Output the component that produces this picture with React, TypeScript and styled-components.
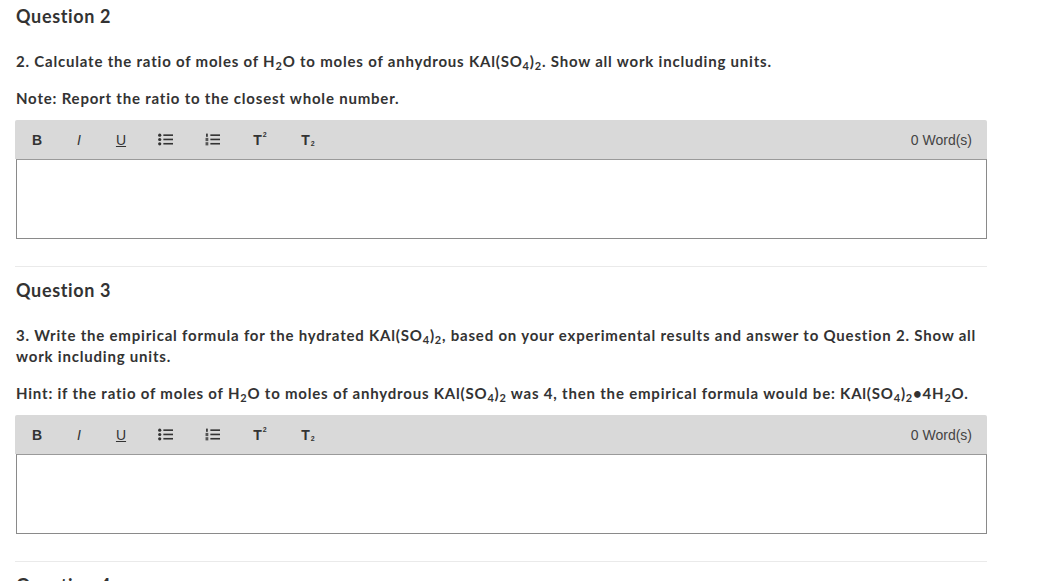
import styled, { createGlobalStyle } from "styled-components";

const GlobalStyle = createGlobalStyle`
  body {
    margin: 0;
    background: #fff;
    font-family: Lato, "Open Sans", "Liberation Sans", sans-serif;
    color: #333;
  }
`;

const Page = styled.div`
  width: 972px;
  padding: 5px 0 0 15px;
`;

const Question = styled.section`
  border-bottom: 1px solid #eaeaea;
  margin-bottom: 12px;
`;

const Title = styled.h2`
  margin: 0 0 24px 1px;
  font-size: 18px;
  line-height: 22px;
  font-weight: 700;
  letter-spacing: 0.65px;
`;

const Para = styled.p`
  margin: 0 0 16px 1px;
  font-size: 15px;
  line-height: 21px;
  font-weight: 700;
  letter-spacing: 0.8px;
  &:last-of-type {
    margin-bottom: 11px;
  }
  sub {
    font-size: 11px;
    line-height: 0;
    vertical-align: -3px;
  }
`;

const Editor = styled.div`
  margin-bottom: 27px;
`;

const Toolbar = styled.div`
  height: 39px;
  background: #d9d9d9;
  border-radius: 2px 2px 0 0;
  display: flex;
  align-items: center;
  padding: 0 15px 0 1px;
  font-family: "Liberation Sans", Arial, sans-serif;
  color: #333;
`;

const Tool = styled.span<{
  $w: number;
  $bold?: boolean;
  $italic?: boolean;
  $under?: boolean;
}>`
  width: ${(p) => p.$w}px;
  display: flex;
  justify-content: center;
  align-items: center;
  font-size: 14px;
  font-weight: ${(p) => (p.$bold ? 700 : 400)};
  font-style: ${(p) => (p.$italic ? "italic" : "normal")};
  text-decoration: ${(p) => (p.$under ? "underline" : "none")};
`;

const Script = styled.span<{ $up?: boolean }>`
  font-size: 7px;
  font-weight: 700;
  margin-left: 1px;
  position: relative;
  top: ${(p) => (p.$up ? "-5px" : "4px")};
`;

const Words = styled.span`
  margin-left: auto;
  font-size: 14px;
  color: #444;
`;

const Area = styled.div`
  height: 78px;
  margin-left: 1px;
  border: 1px solid #8a8a8a;
  border-top-color: #9a9a9a;
  background: #fff;
`;

const BulletIcon = () => (
  <svg width="15" height="13" viewBox="0 0 14 12" fill="#333">
    <circle cx="1.6" cy="2" r="1.5" />
    <circle cx="1.6" cy="6" r="1.5" />
    <circle cx="1.6" cy="10" r="1.5" />
    <rect x="5" y="1.2" width="9" height="1.5" />
    <rect x="5" y="5.2" width="9" height="1.5" />
    <rect x="5" y="9.2" width="9" height="1.5" />
  </svg>
);

const NumberIcon = () => (
  <svg width="15" height="13" viewBox="0 0 14 12" fill="#333">
    <rect x="1" y="0.5" width="1.6" height="3" />
    <rect x="0.5" y="4.5" width="2.6" height="3" opacity="0.8" />
    <rect x="0.5" y="8.5" width="2.6" height="3" opacity="0.8" />
    <rect x="5" y="1.2" width="9" height="1.5" />
    <rect x="5" y="5.2" width="9" height="1.5" />
    <rect x="5" y="9.2" width="9" height="1.5" />
  </svg>
);

const RichEditor = () => (
  <Editor>
    <Toolbar>
      <Tool $w={42} $bold>
        B
      </Tool>
      <Tool $w={42} $italic>
        I
      </Tool>
      <Tool $w={42} $under>
        U
      </Tool>
      <Tool $w={46}>
        <BulletIcon />
      </Tool>
      <Tool $w={48}>
        <NumberIcon />
      </Tool>
      <Tool $w={48} $bold>
        T<Script $up>2</Script>
      </Tool>
      <Tool $w={48} $bold>
        T<Script>2</Script>
      </Tool>
      <Words>0 Word(s)</Words>
    </Toolbar>
    <Area />
  </Editor>
);

export default function App() {
  return (
    <Page>
      <GlobalStyle />
      <Question>
        <Title>Question 2</Title>
        <Para>
          2. Calculate the ratio of moles of H<sub>2</sub>O to moles of anhydrous
          KAl(SO<sub>4</sub>)<sub>2</sub>. Show all work including units.
        </Para>
        <Para>Note: Report the ratio to the closest whole number.</Para>
        <RichEditor />
      </Question>
      <Question>
        <Title>Question 3</Title>
        <Para>
          3. Write the empirical formula for the hydrated KAl(SO<sub>4</sub>)
          <sub>2</sub>, based on your experimental results and answer to
          Question 2. Show all work including units.
        </Para>
        <Para>
          Hint: if the ratio of moles of H<sub>2</sub>O to moles of anhydrous
          KAl(SO<sub>4</sub>)<sub>2</sub> was 4, then the empirical formula
          would be: KAl(SO<sub>4</sub>)<sub>2</sub>•4H<sub>2</sub>O.
        </Para>
        <RichEditor />
      </Question>
      <Title>Question 4</Title>
    </Page>
  );
}
